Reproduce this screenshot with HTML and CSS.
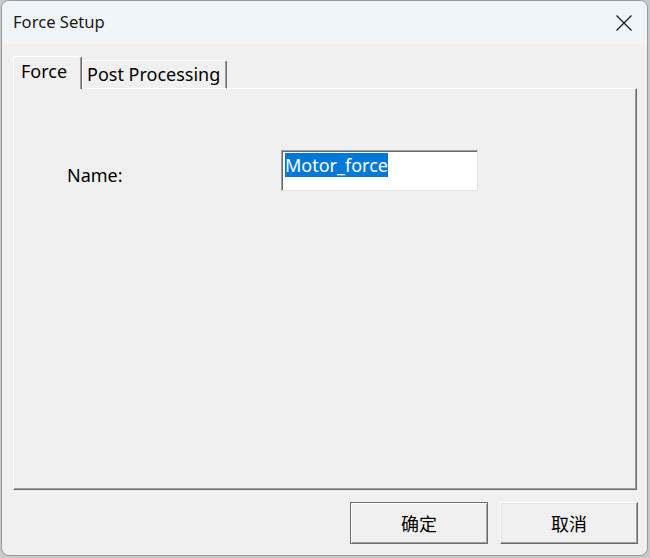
FILE: index.html
```html
<!DOCTYPE html>
<html>
<head>
<meta charset="utf-8">
<link rel="stylesheet" href="styles.css">
</head>
<body>
<div class="window">
  <div class="titlebar">
    <span class="title">Force Setup</span>
    <svg class="close" width="16" height="16" viewBox="0 0 16 16"><path d="M0.5 0.5 L15.5 15.5 M15.5 0.5 L0.5 15.5" stroke="#1b1b1b" stroke-width="1.3" fill="none"/></svg>
  </div>
  <div class="content">
    <div class="tabs">
      <div class="tab active">Force</div>
      <div class="tab">Post Processing</div>
    </div>
    <div class="panel">
      <div class="row">
        <label class="label">Name:</label>
        <div class="input"><span class="sel">Motor_force</span></div>
      </div>
    </div>
    <div class="buttons">
      <button class="btn default">确定</button>
      <button class="btn">取消</button>
    </div>
  </div>
</div>
</body>
</html>
```

FILE: styles.css
```css
html, body {
  margin: 0;
  padding: 0;
  background: #c8c8c8;
  font-family: "Noto Sans", "Noto Sans CJK SC", sans-serif;
  color: #000;
}
.window {
  box-sizing: border-box;
  margin-left: 1px;
  width: 647px;
  height: 556px;
  border: 1px solid #9a9a9a;
  border-radius: 8px;
  overflow: hidden;
  background: #f0f0f0;
  display: flex;
  flex-direction: column;
}
.titlebar {
  height: 43px;
  flex: none;
  background: #eff4f9;
  display: flex;
  align-items: center;
  justify-content: space-between;
  padding: 0 15px 0 11px;
}
.title {
  font-size: 16.6px;
  color: #1a1a1a;
  position: relative;
  top: -1px;
}
.content {
  padding: 13px 0 0 11px;
  display: flex;
  flex-direction: column;
}
.tabs {
  display: flex;
  align-items: flex-end;
  height: 32px;
  position: relative;
  z-index: 1;
  margin-bottom: -1px;
}
.tab {
  box-sizing: border-box;
  background: #f0f0f0;
  border-left: 1px solid #ffffff;
  border-top: 1px solid #ffffff;
  border-right: 1px solid #696969;
  box-shadow: inset -1px 0 0 #a0a0a0;
  border-top-left-radius: 2px;
  border-top-right-radius: 2px;
  font-size: 18px;
  line-height: 24px;
  white-space: nowrap;
}
.tab.active {
  width: 69px;
  height: 33px;
  padding: 2px 0 0 7px;
}
.tab:not(.active) {
  width: 145px;
  height: 29px;
  padding: 1px 0 0 4px;
  border-bottom: 1px solid #ffffff;
}
.panel {
  box-sizing: border-box;
  width: 624px;
  height: 402px;
  border-left: 1px solid #ffffff;
  border-top: 1px solid #ffffff;
  border-right: 1px solid #696969;
  border-bottom: 1px solid #696969;
  box-shadow: inset -1px -1px 0 #a0a0a0;
}
.row {
  display: flex;
  align-items: flex-start;
  padding: 61px 0 0 53px;
}
.label {
  width: 214px;
  font-size: 18px;
  line-height: 24px;
  padding-top: 13px;
}
.input {
  box-sizing: border-box;
  width: 197px;
  height: 41px;
  background: #fff;
  border-top: 1px solid #a0a0a0;
  border-left: 1px solid #a0a0a0;
  border-right: 1px solid #e3e3e3;
  border-bottom: 1px solid #e3e3e3;
  box-shadow: inset 1px 1px 0 #696969;
  padding: 2px 0 0 3px;
  font-size: 18px;
  line-height: 24px;
}
.sel {
  background: #0078d7;
  color: #fff;
  display: inline-block;
}
.buttons {
  display: flex;
  justify-content: flex-end;
  gap: 12px;
  padding: 12px 9px 0 0;
}
.btn {
  box-sizing: border-box;
  width: 138px;
  height: 42px;
  background: #f0f0f0;
  font-family: "Noto Sans CJK SC", sans-serif;
  font-size: 18px;
  color: #000;
  border-top: 1px solid #ffffff;
  border-left: 1px solid #ffffff;
  border-right: 1px solid #696969;
  border-bottom: 1px solid #696969;
  box-shadow: inset -1px -1px 0 #a0a0a0, inset 1px 1px 0 #e3e3e3;
  padding: 0;
}
.btn.default {
  border: 1px solid #6d6d6d;
  box-shadow: inset 1px 1px 0 #ffffff, inset -1px -1px 0 #a0a0a0;
}
```
